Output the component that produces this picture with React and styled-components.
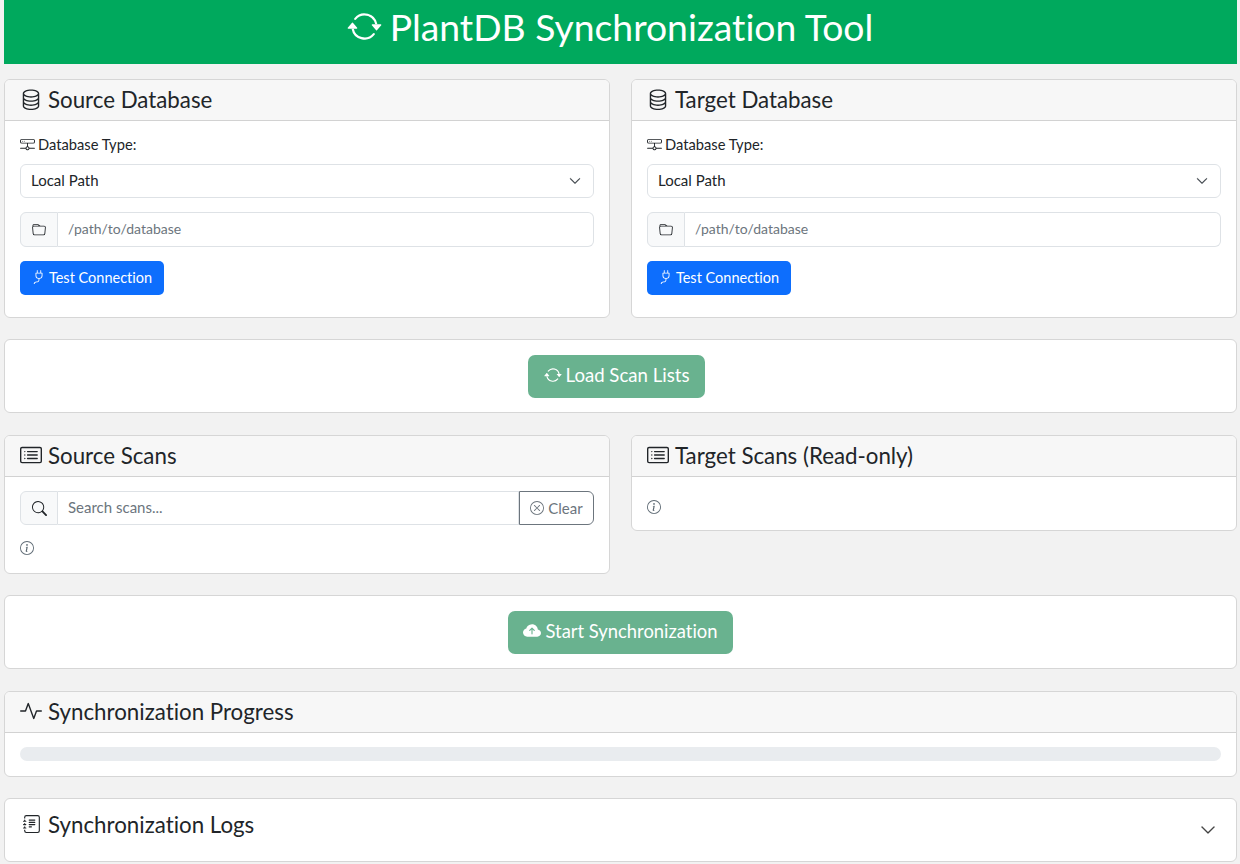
import React from "react";
import styled, { createGlobalStyle } from "styled-components";
import {
  BsArrowRepeat, BsDatabase, BsHddNetwork, BsFolder, BsPlug, BsCardList, BsSearch,
  BsXCircle, BsInfoCircle, BsCloudArrowUpFill, BsActivity, BsJournalText, BsChevronDown,
} from "react-icons/bs";

const Global = createGlobalStyle`
  html, body { margin: 0; padding: 0; background: #f2f2f2; }
  body { font-family: "Lato", "Open Sans", sans-serif; color: #212529; font-size: 14px; font-variant-ligatures: none; }
  * { box-sizing: border-box; }
`;
const Page = styled.div`
  padding: 0 3px 2px 4px;
  display: flex;
  flex-direction: column;
  gap: 21px;
`;
const Banner = styled.header`
  height: 64px;
  margin-bottom: -6px;
  padding: 0 21px 11px 0;
  background: #00a95d;
  color: #fff;
  display: flex;
  align-items: center;
  justify-content: center;
  gap: 8px;
  font-size: 37.3px;
  svg { width: 35px; height: 35px; }
`;
const Columns = styled.div`
  display: grid;
  grid-template-columns: 606px 606px;
  gap: 21px;
  align-items: start;
  margin-top: ${(p) => p.$top || "0"};
`;
const Card = styled.section`
  background: #fff;
  border: 1px solid #d6d6d6;
  border-radius: 6px;
  overflow: hidden;
  margin-top: ${(p) => p.$top || "0"};
`;
const CardHeader = styled.h2`
  margin: 0;
  height: 41px;
  padding: 0 15px 2px;
  background: #f7f7f7;
  border-bottom: 1px solid #d2d2d2;
  display: flex;
  align-items: center;
  gap: 6px;
  font-size: 22.3px;
  font-weight: 400;
  svg { width: 22px; height: 22px; flex: none; }
`;
const CardBody = styled.div`
  padding: ${(p) => p.$pad || "14px 15px 15px"};
`;
const Label = styled.label`
  display: flex;
  align-items: center;
  gap: 3px;
  height: 18px;
  margin-bottom: 11px;
  font-size: 14.7px;
  svg { width: 15px; height: 15px; }
`;
const SelectBox = styled.div`
  height: 34px;
  border: 1px solid #dee2e6;
  border-radius: 6px;
  display: flex;
  align-items: center;
  justify-content: space-between;
  padding: 0 12px 2px 10px;
  margin-bottom: 14px;
  font-size: 15px;
  svg { width: 12px; height: 12px; color: #343a40; margin-top: 2px; stroke: currentColor; stroke-width: 0.6px; }
`;
const InputGroup = styled.div`
  display: flex;
  height: ${(p) => p.$h || "35px"};
  margin-bottom: ${(p) => p.$mb || "14px"};
`;
const Addon = styled.span`
  width: 38px;
  flex: none;
  background: #f8f9fa;
  border: 1px solid #dee2e6;
  border-radius: 6px 0 0 6px;
  display: flex;
  align-items: center;
  justify-content: center;
  svg { width: ${(p) => p.$icon || "14px"}; height: ${(p) => p.$icon || "14px"}; }
`;
const FieldText = styled.span`
  flex: 1;
  border: 1px solid #dee2e6;
  border-left: 0;
  border-radius: ${(p) => (p.$joined ? "0" : "0 6px 6px 0")};
  display: flex;
  align-items: center;
  padding: 0 10px 2px;
  color: #6c757d;
  font-size: ${(p) => p.$size || "14px"};
`;
const ClearButton = styled.span`
  width: 75px;
  flex: none;
  border: 1px solid #6c757d;
  border-radius: 0 6px 6px 0;
  color: #6c757d;
  display: flex;
  align-items: center;
  justify-content: center;
  gap: 4px;
  padding-bottom: 1px;
  font-size: 15px;
  svg { width: 14px; height: 14px; }
`;
const TestButton = styled.button`
  height: 34px;
  width: 144px;
  padding: 0 0 2px;
  display: flex;
  align-items: center;
  justify-content: center;
  gap: 3px;
  background: #0d6efd;
  color: #fff;
  border: 0;
  border-radius: 5px;
  font: inherit;
  font-size: 14.5px;
  margin-bottom: 7px;
  svg { width: 14px; height: 14px; }
`;
const ActionBody = styled.div`
  padding: 15px 15px 14px;
  display: flex;
  justify-content: center;
`;
const BigButton = styled.button`
  height: 43px;
  width: ${(p) => p.$w};
  margin-right: ${(p) => p.$shift || "0"};
  padding: 0 0 3px;
  display: flex;
  align-items: center;
  justify-content: center;
  gap: 4px;
  background: #69b28f;
  color: #fff;
  border: 0;
  border-radius: 7px;
  font: inherit;
  font-size: ${(p) => p.$size || "18.4px"};
  svg { width: 18px; height: 18px; }
`;
const InfoIcon = styled.div`
  height: 14px;
  display: flex;
  align-items: center;
  color: #5f6b75;
  svg { width: 14px; height: 14px; }
`;
const Progress = styled.div`
  height: 14px;
  border-radius: 7px;
  background: #e9ecef;
`;
const LogsCard = styled(Card)`
  height: 64px;
  padding: 0 20px 10px 15px;
  display: flex;
  align-items: center;
  justify-content: space-between;
`;
const LogsTitle = styled.h2`
  margin: 0;
  padding-bottom: 2px;
  display: flex;
  align-items: center;
  gap: 7px;
  font-size: 22.3px;
  font-weight: 400;
  svg { width: 18px; height: 18px; margin-left: 3px; }
`;
const Chevron = styled(BsChevronDown)`
  width: 16px;
  height: 16px;
  margin-top: 10px;
  color: #333;
  stroke: currentColor;
  stroke-width: 0.4px;
`;

const DatabaseCard = ({ title }) => (
  <Card>
    <CardHeader><BsDatabase />{title}</CardHeader>
    <CardBody>
      <Label><BsHddNetwork />Database Type:</Label>
      <SelectBox>Local Path<BsChevronDown /></SelectBox>
      <InputGroup>
        <Addon><BsFolder /></Addon>
        <FieldText>/path/to/database</FieldText>
      </InputGroup>
      <TestButton><BsPlug />Test Connection</TestButton>
    </CardBody>
  </Card>
);

export default function App() {
  return (
    <>
      <Global />
      <Page>
        <Banner><BsArrowRepeat />PlantDB Synchronization Tool</Banner>
        <Columns>
          <DatabaseCard title="Source Database" />
          <DatabaseCard title="Target Database" />
        </Columns>
        <Card>
          <ActionBody>
            <BigButton $w="177px" $shift="8px" $size="18.6px"><BsArrowRepeat />Load Scan Lists</BigButton>
          </ActionBody>
        </Card>
        <Columns $top="1px">
          <Card>
            <CardHeader><BsCardList />Source Scans</CardHeader>
            <CardBody $pad="14px 15px 18px">
              <InputGroup $h="34px" $mb="16px">
                <Addon $icon="15px"><BsSearch /></Addon>
                <FieldText $joined $size="15px">Search scans...</FieldText>
                <ClearButton><BsXCircle />Clear</ClearButton>
              </InputGroup>
              <InfoIcon><BsInfoCircle /></InfoIcon>
            </CardBody>
          </Card>
          <Card>
            <CardHeader><BsCardList />Target Scans (Read-only)</CardHeader>
            <CardBody $pad="23px 15px 16px">
              <InfoIcon><BsInfoCircle /></InfoIcon>
            </CardBody>
          </Card>
        </Columns>
        <Card>
          <ActionBody>
            <BigButton $w="225px"><BsCloudArrowUpFill />Start Synchronization</BigButton>
          </ActionBody>
        </Card>
        <Card $top="1px">
          <CardHeader><BsActivity />Synchronization Progress</CardHeader>
          <CardBody $pad="14px 15px 15px"><Progress /></CardBody>
        </Card>
        <LogsCard>
          <LogsTitle><BsJournalText />Synchronization Logs</LogsTitle>
          <Chevron />
        </LogsCard>
      </Page>
    </>
  );
}
